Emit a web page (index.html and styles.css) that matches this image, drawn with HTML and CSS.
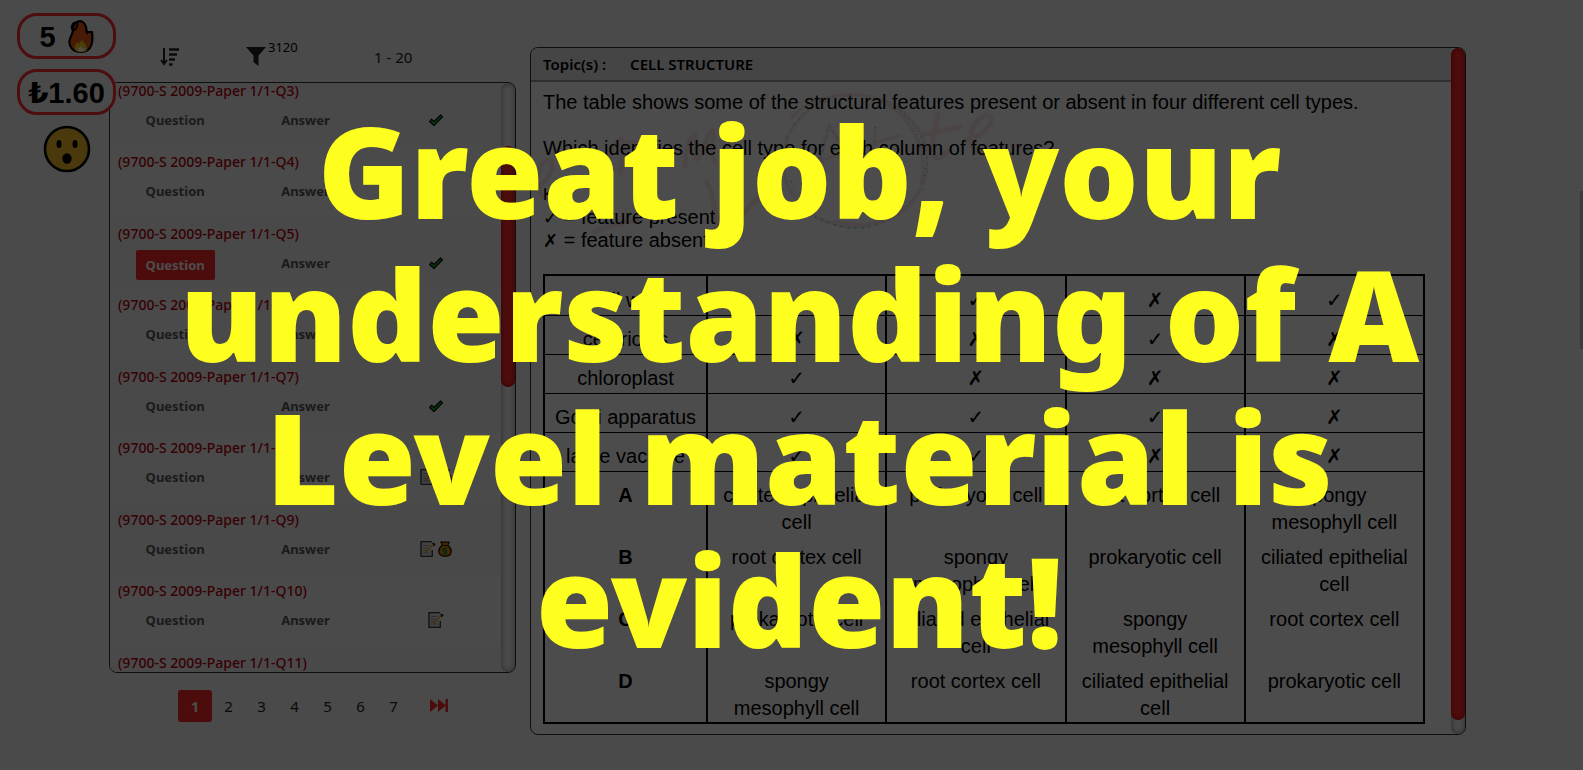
FILE: index.html
```html
<!DOCTYPE html>
<html lang="en">
<head>
<meta charset="utf-8">
<title>Cell Structure</title>
<link rel="stylesheet" href="styles.css">
</head>
<body>
<svg class="defs" aria-hidden="true">
  <symbol id="tick" viewBox="0 0 16 13"><path d="M1.5 7.5 3.6 5.2 6 7.4 12.6 1l1.9 1.9L6 11.6z" fill="#12a832" stroke="#000" stroke-width="1.1" stroke-linejoin="round"/></symbol>
  <symbol id="note" viewBox="0 0 16 16"><path d="M1.7 1.5h9.6v13H1.7z" fill="#ddd"/><path d="M12.200 9v6.200H1V.8h11" fill="none" stroke="#000" stroke-width="1.100"/><path d="M3 4.500h6M3 7h5M3 9.500h3M3 12h7" stroke="#999"/><path d="M5.500 11.500 13 3.500" stroke="#e8a62c" stroke-width="1.700"/><path d="M12.500 2 14.800 3.200 13.500 5" fill="#c33" stroke="#300" stroke-width="1.200"/></symbol>
  <symbol id="bag" viewBox="0 0 14 16"><path d="M3 1.200h8L9.800 4.600c2.200 1.500 3.400 3.500 3.400 5.600 0 3-2.200 5-6.200 5s-6.200-2-6.200-5c0-2.100 1.200-4.100 3.400-5.600z" fill="#e08a00" stroke="#201000" stroke-width="1.200"/><path d="M4 4.500h6" stroke="#402000" stroke-width="1.200"/><path d="M9 7.600H6.200a1.200 1.200 0 0 0 0 2.500h1.600a1.200 1.200 0 0 1 0 2.500H5M7 6.500v7.200" fill="none" stroke="#085" stroke-width="1.200"/></symbol>
</svg>

<div class="page">
  <aside class="badges">
    <div class="pill">5
      <svg class="flame" viewBox="0 0 26 34"><path d="M9 2C13 0 17 2 18 7c1 3 0 5 1 6l1-1h4c1 8 1 20-11 20C4 32 1 26 1.500 21 2 16 5 14 5 10 3 9 4 4 6 3z" fill="#ef5a12" stroke="#000" stroke-width="2.200" stroke-linejoin="round"/><path d="M7 30c-1-4 1-7 3-8l1 2c1-2 2-3 3-4 2 3 5 5 5 10-3 3-9 3-12 0z" fill="#f6d21a"/><path d="M10 31v-4l2 1 1-2 2 3 2-1-1 3z" fill="#fff"/><path d="M5 9C5 6 7 3 9 3c2 2-1 5-2 7z" fill="#ef5a12" stroke="#000" stroke-width="1.800"/></svg>
    </div>
    <div class="pill">₺1.60</div>
    <svg class="face" viewBox="0 0 48 48"><circle cx="24" cy="24" r="22" fill="#f5bf2c" stroke="#000" stroke-width="2.600"/><ellipse cx="16" cy="19" rx="2.500" ry="4"/><ellipse cx="32" cy="19" rx="2.500" ry="4"/><ellipse cx="24" cy="33.500" rx="4.600" ry="5.200"/></svg>
  </aside>

  <section class="browser">
    <div class="tools">
      <button class="tool" type="button" aria-label="Sort"><svg width="20" height="18" viewBox="0 0 20 18"><path d="M4 0v15M1 12l3 4 3-4" fill="none" stroke="#222" stroke-width="2"/><path d="M9 1.500h10M9 6.500h8M9 11.500h6M9 16.500h3.500" stroke="#222" stroke-width="2.600"/></svg></button>
      <button class="tool" type="button" aria-label="Filter"><svg width="20" height="20" viewBox="0 0 20 20"><path d="M0 1h20l-7.500 8.500V20l-5-4V9.500z" fill="#222"/></svg><span class="count">3120</span></button>
      <span class="range">1 - 20</span>
    </div>

    <div class="listbox">
      <ul class="list">
        <li class="item"><h3>(9700-S 2009-Paper 1/1-Q3)</h3><div class="acts"><button type="button">Question</button><button type="button">Answer</button><span><svg width="16" height="13"><use href="#tick"/></svg></span></div></li>
        <li class="item"><h3>(9700-S 2009-Paper 1/1-Q4)</h3><div class="acts"><button type="button">Question</button><button type="button">Answer</button><span></span></div></li>
        <li class="item"><h3>(9700-S 2009-Paper 1/1-Q5)</h3><div class="acts"><button type="button" class="on">Question</button><button type="button">Answer</button><span><svg width="16" height="13"><use href="#tick"/></svg></span></div></li>
        <li class="item"><h3>(9700-S 2009-Paper 1/1-Q6)</h3><div class="acts"><button type="button">Question</button><button type="button">Answer</button><span></span></div></li>
        <li class="item"><h3>(9700-S 2009-Paper 1/1-Q7)</h3><div class="acts"><button type="button">Question</button><button type="button">Answer</button><span><svg width="16" height="13"><use href="#tick"/></svg></span></div></li>
        <li class="item"><h3>(9700-S 2009-Paper 1/1-Q8)</h3><div class="acts"><button type="button">Question</button><button type="button">Answer</button><span><svg width="16" height="16"><use href="#note"/></svg><svg width="14" height="16"><use href="#bag"/></svg></span></div></li>
        <li class="item"><h3>(9700-S 2009-Paper 1/1-Q9)</h3><div class="acts"><button type="button">Question</button><button type="button">Answer</button><span><svg width="16" height="16"><use href="#note"/></svg><svg width="14" height="16"><use href="#bag"/></svg></span></div></li>
        <li class="item"><h3>(9700-S 2009-Paper 1/1-Q10)</h3><div class="acts"><button type="button">Question</button><button type="button">Answer</button><span><svg width="16" height="16"><use href="#note"/></svg></span></div></li>
        <li class="item"><h3>(9700-S 2009-Paper 1/1-Q11)</h3></li>
      </ul>
      <div class="track"><div class="thumb list-thumb"></div></div>
    </div>

    <nav class="pages" aria-label="Pages">
      <a class="current" href="#p1">1</a><a href="#p2">2</a><a href="#p3">3</a><a href="#p4">4</a><a href="#p5">5</a><a href="#p6">6</a><a href="#p7">7</a>
      <a class="last" href="#last" aria-label="Last page"><svg width="18" height="13" viewBox="0 0 18 13"><path d="M0 0l8 6.500L0 13zM8 0l8 6.500L8 13zM15.500 0H18v13h-2.500z" fill="#ff2a2a"/></svg></a>
    </nav>
  </section>

  <main class="viewer">
    <div class="doc">
      <header class="topic"><span>Topic(s) :</span><span>CELL STRUCTURE</span></header>
      <div class="sheet">
        <svg class="scribble" width="490" height="165" viewBox="0 0 490 165" fill="none" aria-hidden="true">
          <g stroke="#ffe6e6" stroke-width="5" stroke-linecap="round">
            <path d="M8 105c14-8 22-20 18-28-5-6-14 6-14 20 0 10 8 20 18 16M70 96c14-22 20-42 26-42 6 4-2 30 0 34M96 58h24M160 80c0-16 6-30 10-30 4 8-2 20 2 24 6-4 10-28 16-28 2 8-4 26 2 30M182 98c8 10 6 28 10 46 6-20 10-34 16-34 4 6-2 20 4 24 6-2 12-16 22-20M70 147c16-8 30-10 46-12"/>
            <path d="M400 49c14-1 26-5 36-8M413 30c-2 16-8 30-5 40 4 6 10 2 15-4M441 55c12-2 26-12 25-22-4-8-18 4-20 16-2 14 6 22 26 20"/>
          </g>
          <g stroke="#ffe6e6" stroke-width="3"><ellipse cx="330" cy="76" rx="72" ry="66"/><path d="M266 34c16-22 56-30 84-20 40 14 56 60 44 92-12 26-50 40-86 30"/><path d="M294 80l10-40 22 36M296 76c20-8 60-20 80-26M350 42v34"/></g>
          <g stroke="#1fc4cc" stroke-width="1" stroke-dasharray="1 6"><path d="M262 52c14-26 28-38 52-42M370 22c24 18 34 50 28 84M296 134c22 12 44 12 66 0M266 96c6 14 12 18 18 22M294 80l10-40 22 36M350 42l-2 24"/><path d="M374 24c20 18 30 40 28 66M290 132c24 10 46 16 68 6"/></g>
        </svg>
        <p>The table shows some of the structural features present or absent in four different cell types.</p>
        <p>Which identifies the cell type for each column of features?</p>
        <ul class="key">
          <li class="label">Key</li>
          <li><i>✓</i> = feature present</li>
          <li><i>✗</i> = feature absent</li>
        </ul>
        <table class="grid">
          <colgroup><col class="first"><col><col><col><col></colgroup>
          <tbody class="marks">
            <tr><td>cell wall</td><td>✓</td><td>✓</td><td>✗</td><td>✓</td></tr>
            <tr><td>centrioles</td><td>✗</td><td>✗</td><td>✓</td><td>✗</td></tr>
            <tr><td>chloroplast</td><td>✓</td><td>✗</td><td>✗</td><td>✗</td></tr>
            <tr><td>Golgi apparatus</td><td>✓</td><td>✓</td><td>✓</td><td>✗</td></tr>
            <tr><td>large vacuole</td><td>✓</td><td>✓</td><td>✗</td><td>✗</td></tr>
          </tbody>
          <tbody class="choices">
            <tr><th scope="row">A</th><td>ciliated epithelial cell</td><td>prokaryotic cell</td><td>root cortex cell</td><td>spongy mesophyll cell</td></tr>
            <tr><th scope="row">B</th><td>root cortex cell</td><td>spongy mesophyll cell</td><td>prokaryotic cell</td><td>ciliated epithelial cell</td></tr>
            <tr><th scope="row">C</th><td>prokaryotic cell</td><td>ciliated epithelial cell</td><td>spongy mesophyll cell</td><td>root cortex cell</td></tr>
            <tr><th scope="row">D</th><td>spongy mesophyll cell</td><td>root cortex cell</td><td>ciliated epithelial cell</td><td>prokaryotic cell</td></tr>
          </tbody>
        </table>
      </div>
    </div>
    <div class="track"><div class="thumb doc-thumb"></div></div>
  </main>
</div>

<div class="window-thumb"></div>
<div class="overlay" role="dialog" aria-label="Praise"><p>Great job, your<br>understanding of A<br>Level material is<br>evident!</p></div>
</body>
</html>
```
FILE: styles.css
```css
* { box-sizing: border-box; }
body {
  margin: 0;
  background: #f8f8f8;
  color: #000;
  font: 13px/18px "Noto Sans", "DejaVu Sans", sans-serif;
  overflow: hidden;
}
.defs { position: absolute; width: 0; height: 0; }
ul, p, h3 { margin: 0; padding: 0; }
ul { list-style: none; }
button { border: 0; background: none; padding: 0; color: inherit; font: inherit; }

.page { display: flex; height: 100vh; padding-right: 117px; }

.badges {
  position: absolute;
  z-index: 1;
  top: 13px;
  left: 17px;
  display: flex;
  flex-direction: column;
  align-items: center;
  gap: 10px;
}
.pill {
  display: flex;
  align-items: center;
  justify-content: center;
  gap: 12px;
  width: 99px;
  height: 46px;
  padding-top: 2px;
  border: 3px solid #ff3030;
  border-radius: 20px;
  background: #f8f8f8;
  font: bold 29px/38px "Liberation Sans", "DejaVu Sans", sans-serif;
}
.flame { width: 26px; height: 34px; }
.face { width: 48px; height: 48px; }

.browser { display: flex; flex-direction: column; width: 407px; margin-left: 109px; }
.tools {
  display: grid;
  grid-template-columns: 122px 143px 1fr;
  align-items: end;
  height: 82px;
  padding-bottom: 16px;
}
.tool { display: flex; align-items: flex-end; justify-content: center; gap: 2px; height: 26px; }
.tool:nth-child(2) { justify-content: flex-start; padding-left: 15px; }
.count { align-self: flex-start; font-size: 13px; line-height: 14px; }
.range { color: #222; font-size: 15px; }

.listbox {
  display: flex;
  flex: 1;
  min-height: 0;
  border: 1px solid #333;
  border-radius: 8px;
  overflow: hidden;
}
.list { flex: 1; margin-top: -9px; }
.item { height: 71px; padding: 8px 0 0 8px; background: #f6f6f6; }
.item:nth-child(even) { height: 72px; background: #f9f9f9; }
.item h3 { color: #b8000c; font-size: 14px; font-weight: 500; }
.acts {
  display: grid;
  grid-template-columns: repeat(3, 1fr);
  align-items: center;
  justify-items: center;
  height: 40px;
  margin-left: -8px;
  color: #5a5a5a;
  font-weight: 700;
}
.acts .on {
  height: 30px;
  margin-top: 4px;
  padding: 0 10px;
  border-radius: 2px;
  background: #ff2a2a;
  color: #fff;
}
.acts span { display: flex; gap: 2px; }

.track {
  width: 14px;
  border-radius: 7px;
  background: #f4f4f4;
  box-shadow: inset 0 0 5px #888;
}
.thumb { border-radius: 7px; background: #ff2a2a; box-shadow: inset 0 0 5px #b00000; }
.list-thumb { height: 41%; margin-top: 63px; }
.doc-thumb { height: 98%; }

.pages { display: flex; align-items: center; height: 97px; padding: 0 0 32px 69px; }
.pages a {
  width: 33px;
  color: #222;
  font-size: 15px;
  line-height: 32px;
  text-align: center;
  text-decoration: none;
}
.pages .current { width: 34px; border-radius: 3px; background: #ff2a2a; color: #fff; font-weight: 700; }
.pages .last { display: flex; margin-left: 20px; }

.viewer {
  display: flex;
  flex: 1;
  min-width: 0;
  margin: 47px 0 35px 14px;
  border: 1px solid #333;
  border-radius: 8px;
  background: #fff;
  overflow: hidden;
}
.doc { flex: 1; min-width: 0; }
.topic {
  display: flex;
  gap: 24px;
  height: 34px;
  padding-left: 12px;
  border-bottom: 2px solid #a0a0a0;
  background: #e8e8e8;
  font-size: 15px;
  font-weight: 600;
  line-height: 33px;
}
.sheet {
  position: relative;
  padding: 9px 26px 8px 12px;
  font: 20px/23px "Liberation Sans", "DejaVu Sans", sans-serif;
}
.scribble { position: absolute; top: 3px; left: -6px; }
.sheet > :not(.scribble) { position: relative; }
.sheet p { margin-bottom: 23px; }
.key .label { font-size: 16px; }
.key i { font-size: 18px; font-style: normal; line-height: 1; }
.grid { width: 100%; margin-top: 22px; border: 2px solid #000; border-collapse: collapse; table-layout: fixed; }
.grid .first { width: 163px; }
.grid td, .grid th { padding: 0 14px; border-left: 2px solid #000; text-align: center; vertical-align: top; }
.marks td { padding: 12px 0 3px; border-bottom: 1px solid #000; }
.marks tr:first-child td { padding-top: 13px; }
.choices td, .choices th { padding-top: 8px; line-height: 27px; }
.choices tr:first-child td, .choices tr:first-child th { padding-top: 10px; }

.window-thumb { position: fixed; top: 191px; right: 0; width: 3px; height: 158px; background: #c4c4c4; }
.overlay {
  position: fixed;
  inset: 0;
  z-index: 2;
  display: flex;
  align-items: center;
  justify-content: center;
  padding-left: 16px;
  background: rgba(0, 0, 0, .7);
}
.overlay p {
  color: #ffff1f;
  font: 900 125px/143px "Noto Sans", "Open Sans", sans-serif;
  text-align: center;
  white-space: nowrap;
}
```
